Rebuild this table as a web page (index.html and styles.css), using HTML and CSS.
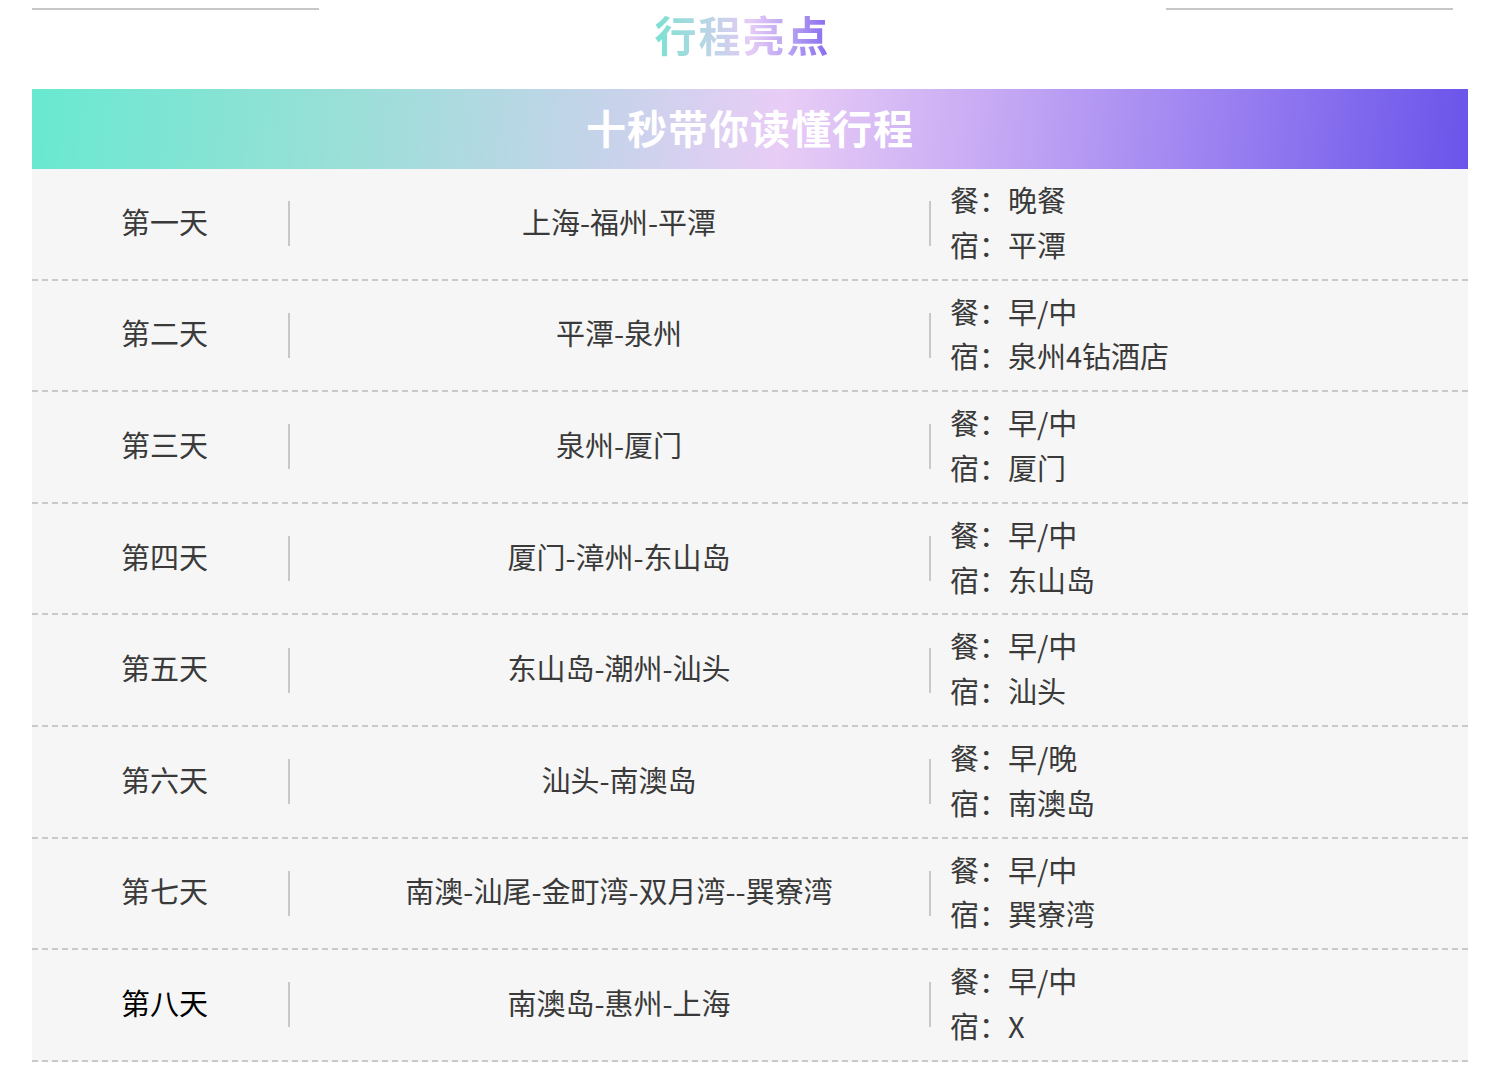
FILE: index.html
```html
<!DOCTYPE html>
<html lang="zh-CN">
<head>
<meta charset="utf-8">
<title>行程亮点</title>
<link rel="stylesheet" href="styles.css">
</head>
<body>
<div class="page">
  <div class="header">
    <div class="hline"></div>
    <div class="title-wrap"><span class="title">行程亮点</span></div>
    <div class="hline"></div>
  </div>
  <div class="banner">十秒带你读懂行程</div>
  <div class="table">
    <div class="row">
      <div class="day">第一天</div><div class="sep"></div>
      <div class="route">上海-福州-平潭</div><div class="sep"></div>
      <div class="meals"><div>餐：晚餐</div><div>宿：平潭</div></div>
    </div>
    <div class="row">
      <div class="day">第二天</div><div class="sep"></div>
      <div class="route">平潭-泉州</div><div class="sep"></div>
      <div class="meals"><div>餐：早/中</div><div>宿：泉州4钻酒店</div></div>
    </div>
    <div class="row">
      <div class="day">第三天</div><div class="sep"></div>
      <div class="route">泉州-厦门</div><div class="sep"></div>
      <div class="meals"><div>餐：早/中</div><div>宿：厦门</div></div>
    </div>
    <div class="row">
      <div class="day">第四天</div><div class="sep"></div>
      <div class="route">厦门-漳州-东山岛</div><div class="sep"></div>
      <div class="meals"><div>餐：早/中</div><div>宿：东山岛</div></div>
    </div>
    <div class="row">
      <div class="day">第五天</div><div class="sep"></div>
      <div class="route">东山岛-潮州-汕头</div><div class="sep"></div>
      <div class="meals"><div>餐：早/中</div><div>宿：汕头</div></div>
    </div>
    <div class="row">
      <div class="day">第六天</div><div class="sep"></div>
      <div class="route">汕头-南澳岛</div><div class="sep"></div>
      <div class="meals"><div>餐：早/晚</div><div>宿：南澳岛</div></div>
    </div>
    <div class="row">
      <div class="day">第七天</div><div class="sep"></div>
      <div class="route">南澳-汕尾-金町湾-双月湾--巽寮湾</div><div class="sep"></div>
      <div class="meals"><div>餐：早/中</div><div>宿：巽寮湾</div></div>
    </div>
    <div class="row">
      <div class="day day-dark">第八天</div><div class="sep"></div>
      <div class="route">南澳岛-惠州-上海</div><div class="sep"></div>
      <div class="meals"><div>餐：早/中</div><div>宿：X</div></div>
    </div>
  </div>
</div>
</body>
</html>
```
FILE: styles.css
```css
html, body {
  margin: 0;
  padding: 0;
  background: #ffffff;
}
body {
  font-family: "Noto Sans CJK SC", "Noto Sans", sans-serif;
  color: #3a3a3a;
}
.page {
  margin-left: 32px;
  width: 1436px;
}
.header {
  width: 1421px;
  display: flex;
  align-items: flex-start;
  height: 89px;
}
.hline {
  width: 287px;
  height: 2px;
  margin-top: 8px;
  background: #c9c6c9;
  flex: none;
}
.title-wrap {
  flex: 1;
  text-align: center;
  line-height: 68px;
}
.title {
  display: inline-block;
  font-size: 42px;
  font-weight: 700;
  letter-spacing: 2px;
  background: linear-gradient(90deg, #78e2d0 0%, #b9d5e6 30%, #e5cbf6 55%, #b69ff3 78%, #8468ee 100%);
  -webkit-background-clip: text;
  background-clip: text;
  color: transparent;
}
.banner {
  height: 80px;
  line-height: 76px;
  text-align: center;
  color: #ffffff;
  font-size: 40px;
  font-weight: 700;
  letter-spacing: 1px;
  background: linear-gradient(96deg, #68e9cf 0%, #9adfd8 22%, #c6d3ea 40%, #e8cdf6 52%, #c8abf4 66%, #9c82f1 82%, #6a54ea 100%);
}
.table {
  background: #f6f6f6;
}
.row {
  display: flex;
  align-items: center;
  padding: 8px 0 12px;
  border-bottom: 2px dashed #ccc8c9;
  font-size: 29px;
}
.day {
  width: 247px;
  padding-left: 9px;
  padding-bottom: 2px;
  text-align: center;
  flex: none;
}
.day-dark {
  color: #000000;
}
.sep {
  width: 2px;
  height: 45px;
  margin-top: 4px;
  background: #cbc6c8;
  flex: none;
}
.route {
  width: 620px;
  padding-left: 19px;
  padding-bottom: 2px;
  text-align: center;
  flex: none;
}
.meals {
  flex: 1;
  padding-left: 19px;
  line-height: 44.8px;
}
```
